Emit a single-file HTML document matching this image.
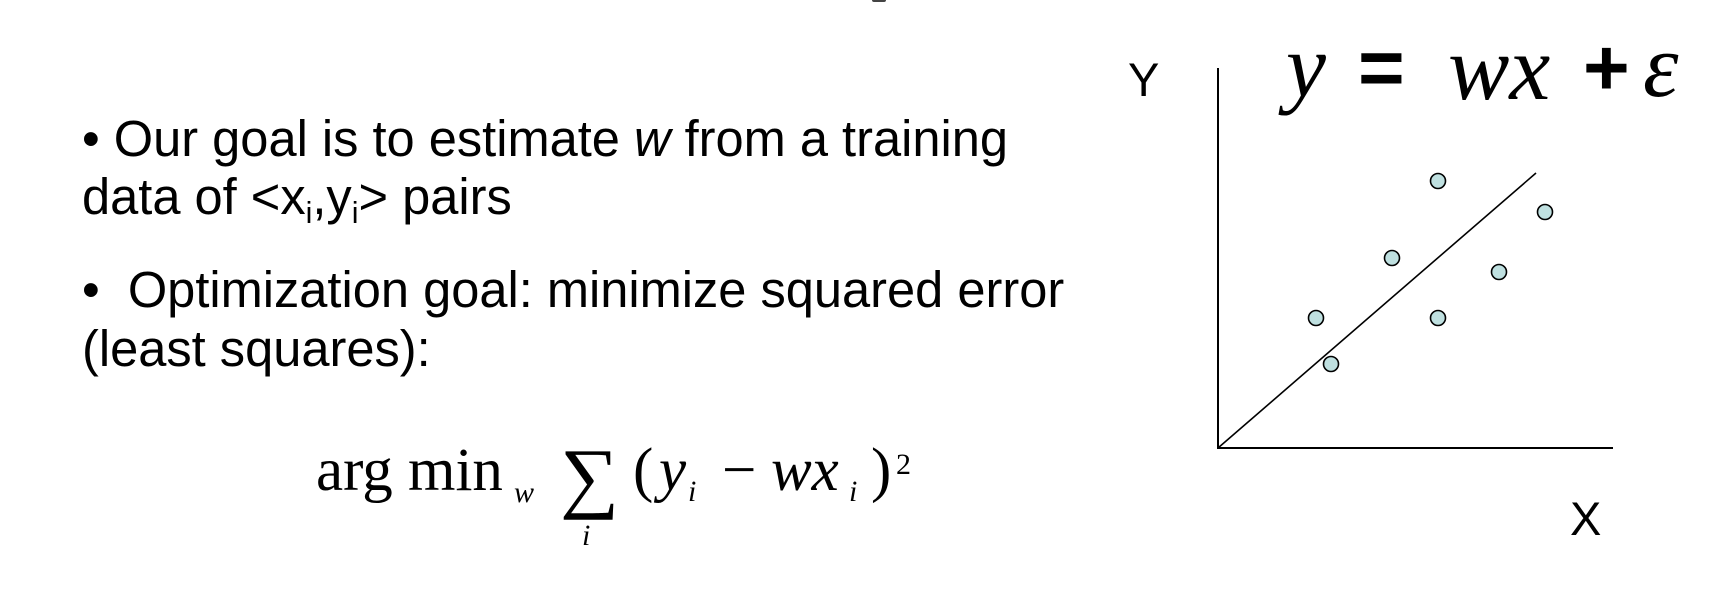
<!DOCTYPE html>
<html><head><meta charset="utf-8"><style>
html,body{margin:0;padding:0;background:#fff;}
body{width:1720px;height:594px;position:relative;overflow:hidden;}
.s{position:absolute;white-space:nowrap;font-family:"Liberation Sans",Arial,sans-serif;color:#000;line-height:1;}
.t{position:absolute;white-space:nowrap;font-family:"Liberation Serif","Times New Roman",serif;color:#000;line-height:1;}
.i{font-style:italic;}
sub{font-size:60%;vertical-align:-0.3em;line-height:0;}
</style></head><body>
<div style="position:absolute;left:872px;top:0;width:14px;height:2px;background:#444;border-radius:0 0 6px 6px;"></div>

<div class="s" style="left:82px;top:114px;font-size:50.6px;">• Our goal is to estimate <i>w</i> from a training</div>
<div class="s" style="left:82px;top:172px;font-size:50.6px;">data of &lt;x<sub>i</sub>,y<sub>i</sub>&gt; pairs</div>
<div class="s" style="left:82px;top:265px;font-size:50.6px;">•&nbsp; Optimization goal: minimize squared error</div>
<div class="s" style="left:82px;top:324px;font-size:50.6px;">(least squares):</div>

<div class="t" style="left:316px;top:440px;font-size:61px;">arg min</div>
<div class="t i" style="left:514px;top:478px;font-size:30px;">w</div>
<div class="t" style="left:560px;top:438px;font-size:79px;transform:scaleX(1.05);transform-origin:left;">∑</div>
<div class="t i" style="left:582px;top:521px;font-size:30px;">i</div>
<div class="t" style="left:633px;top:440px;font-size:61px;">(</div>
<div class="t i" style="left:659px;top:440px;font-size:61px;">y</div>
<div class="t i" style="left:688px;top:477px;font-size:30px;">i</div>
<div class="t" style="left:722px;top:440px;font-size:61px;">−</div>
<div class="t i" style="left:771px;top:440px;font-size:61px;">wx</div>
<div class="t i" style="left:849px;top:477px;font-size:30px;">i</div>
<div class="t" style="left:871px;top:440px;font-size:61px;">)</div>
<div class="t" style="left:896px;top:450px;font-size:30px;">2</div>

<div class="s" style="left:1128px;top:56px;font-size:47px;">Y</div>
<div class="s" style="left:1570px;top:495px;font-size:47px;">X</div>

<div class="t i" style="left:1286px;top:22px;font-size:90px;">y</div>
<div class="s" style="left:1358px;top:28px;font-size:80px;font-weight:bold;">=</div>
<div class="t i" style="left:1448px;top:22px;font-size:92px;">wx</div>
<div class="s" style="left:1583px;top:28px;font-size:80px;font-weight:bold;">+</div>
<div class="t i" style="left:1643px;top:22px;font-size:90px;">ε</div>

<svg width="1720" height="594" style="position:absolute;left:0;top:0;">
<line x1="1218" y1="68" x2="1218" y2="449" stroke="#000" stroke-width="2"/>
<line x1="1217" y1="448" x2="1613" y2="448" stroke="#000" stroke-width="2"/>
<line x1="1218" y1="448" x2="1536" y2="173" stroke="#000" stroke-width="1.6"/>
<g fill="#bfe0e0" stroke="#000" stroke-width="1.6">
<circle cx="1438" cy="181" r="7.5"/>
<circle cx="1545" cy="212" r="7.5"/>
<circle cx="1392" cy="258" r="7.5"/>
<circle cx="1499" cy="272" r="7.5"/>
<circle cx="1316" cy="318" r="7.5"/>
<circle cx="1438" cy="318" r="7.5"/>
<circle cx="1331" cy="364" r="7.5"/>
</g>
</svg>
</body></html>
